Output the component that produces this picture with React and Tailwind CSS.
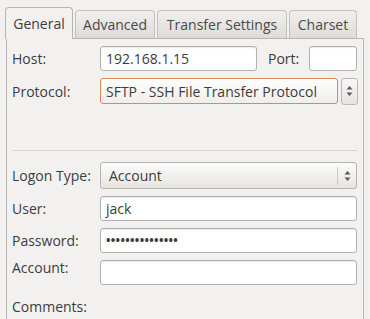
import React from 'react';

const font = { fontFamily: '"Open Sans", "DejaVu Sans", sans-serif' };

// little up/down arrows used by the combo boxes
const Arrows = () => (
  <svg width="7" height="12" viewBox="0 0 7 12">
    <path d="M3.5 1 L6.5 4.5 L0.5 4.5 Z" fill="#5a5a5a" />
    <path d="M3.5 11 L6.5 7.5 L0.5 7.5 Z" fill="#5a5a5a" />
  </svg>
);

const Tab = ({ label, active, w }) =>
  active ? (
    <div
      className={`${w} h-[32px] -mb-px relative z-10 flex items-center justify-center rounded-t-[4px] border border-b-0 border-[#b9b6b1] bg-[#f2f1f0] text-[14px] text-[#3c3c3c]`}
    >
      {label}
    </div>
  ) : (
    <div
      className={`${w} h-[28px] flex items-center justify-center rounded-t-[4px] border border-b-0 border-[#c4c1bc] bg-gradient-to-b from-[#f1f0ee] to-[#dedbd7] text-[14px] text-[#4a4a4a]`}
    >
      {label}
    </div>
  );

const Input = ({ className = '', children }) => (
  <div
    className={`h-[25px] flex items-center px-[5px] rounded-[3px] border border-[#b3b0ab] bg-white shadow-[inset_0_1px_1px_rgba(0,0,0,0.08)] text-[14px] text-[#3c3c3c] ${className}`}
  >
    {children}
  </div>
);

export default function App() {
  return (
    <div className="w-[370px] h-[319px] overflow-hidden bg-[#f2f1f0] pt-[7px] pl-[5px]" style={font}>
      {/* tab strip */}
      <div className="flex items-end gap-[2px]">
        <Tab label="General" active w="w-[68px]" />
        <Tab label="Advanced" w="w-[80px]" />
        <Tab label="Transfer Settings" w="w-[130px]" />
        <Tab label="Charset" w="w-[68px]" />
      </div>

      {/* page */}
      <div className="ml-px w-[358px] h-[300px] border border-[#b9b6b1] bg-[#f2f1f0] pt-[7px] pl-[5px] pr-[5px] text-[14px] text-[#3c3c3c]">
        <div className="flex items-center h-[25px]">
          <span className="w-[88px]">Host:</span>
          <Input className="w-[157px]">192.168.1.15</Input>
          <span className="ml-[11px] w-[41px]">Port:</span>
          <Input className="w-[48px]" />
        </div>

        <div className="flex items-center h-[26px] mt-[7px]">
          <span className="w-[88px]">Protocol:</span>
          <div className="w-[238px] h-[26px] flex items-center px-[5px] rounded-[3px] border border-[#e8825a] bg-gradient-to-b from-white to-[#efeeec] text-[#3c3c3c]">
            SFTP - SSH File Transfer Protocol
          </div>
          <div className="ml-[3px] w-[17px] h-[27px] flex items-center justify-center rounded-[3px] border border-[#bcb9b4] bg-gradient-to-b from-[#f8f7f6] to-[#e6e4e1]">
            <Arrows />
          </div>
        </div>

        <div className="mt-[46px] h-px w-[345px] bg-[#d6d4d0]" />

        <div className="flex items-center h-[27px] mt-[11px]">
          <span className="w-[88px]">Logon Type:</span>
          <div className="w-[257px] h-[27px] flex items-center rounded-[3px] border border-[#b6b3ae] bg-gradient-to-b from-[#fbfbfa] to-[#e7e5e2]">
            <span className="flex-1 pl-[8px]">Account</span>
            <div className="w-px h-[18px] bg-[#cfccc8]" />
            <div className="w-[18px] flex justify-center">
              <Arrows />
            </div>
          </div>
        </div>

        <div className="flex flex-col gap-[7px] mt-[7px]">
          <div className="flex items-center">
            <span className="w-[88px]">User:</span>
            <Input className="w-[257px]">jack</Input>
          </div>
          <div className="flex items-center">
            <span className="w-[88px]">Password:</span>
            <Input className="w-[257px]">
              <span className="text-[12px] tracking-[0.3px] font-bold">•••••••••••••••</span>
            </Input>
          </div>
          <div className="flex items-start">
            <span className="w-[88px] -mt-[3px]">Account:</span>
            <Input className="w-[257px]" />
          </div>
        </div>

        <div className="mt-[11px]">Comments:</div>
      </div>
    </div>
  );
}
